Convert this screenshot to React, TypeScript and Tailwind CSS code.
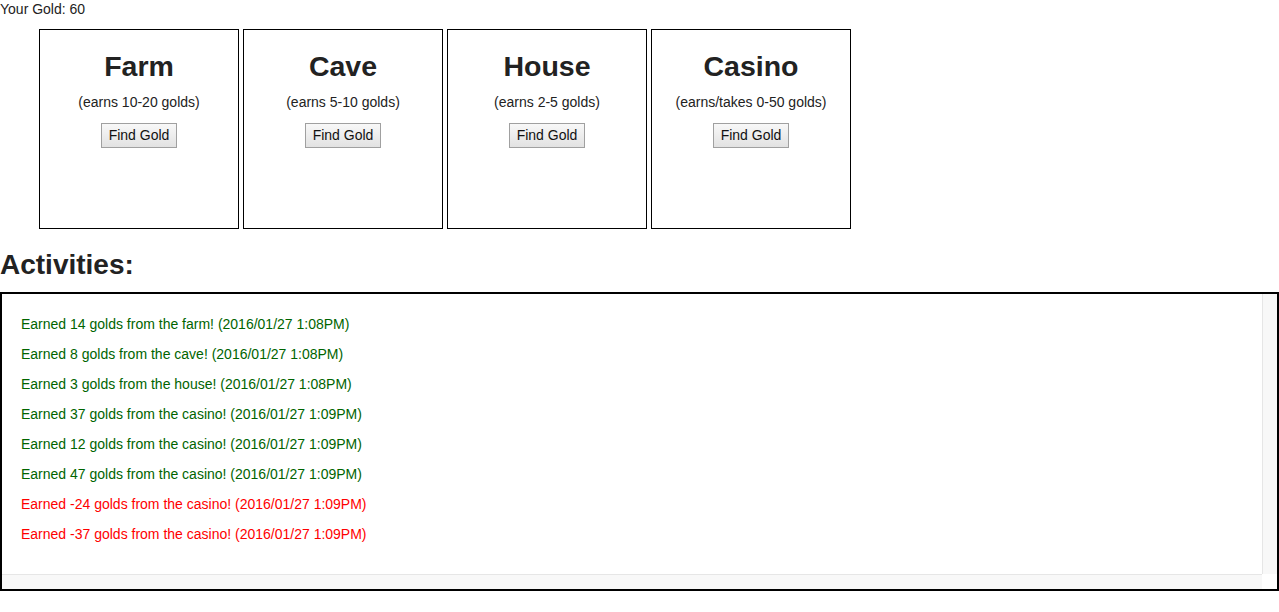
import React from "react";

const places = [
  { name: "Farm", desc: "(earns 10-20 golds)" },
  { name: "Cave", desc: "(earns 5-10 golds)" },
  { name: "House", desc: "(earns 2-5 golds)" },
  { name: "Casino", desc: "(earns/takes 0-50 golds)" },
];

const acts: { text: string; neg: boolean }[] = [
  { text: "Earned 14 golds from the farm! (2016/01/27 1:08PM)", neg: false },
  { text: "Earned 8 golds from the cave! (2016/01/27 1:08PM)", neg: false },
  { text: "Earned 3 golds from the house! (2016/01/27 1:08PM)", neg: false },
  { text: "Earned 37 golds from the casino! (2016/01/27 1:09PM)", neg: false },
  { text: "Earned 12 golds from the casino! (2016/01/27 1:09PM)", neg: false },
  { text: "Earned 47 golds from the casino! (2016/01/27 1:09PM)", neg: false },
  { text: "Earned -24 golds from the casino! (2016/01/27 1:09PM)", neg: true },
  { text: "Earned -37 golds from the casino! (2016/01/27 1:09PM)", neg: true },
];

export default function App() {
  return (
    <div
      className="w-[1279px] h-[612px] bg-white text-[#222] text-[14px] overflow-hidden"
      style={{ fontFamily: '"Liberation Sans", Arial, sans-serif' }}
    >
      <div className="h-[19px] leading-[18px]">Your Gold: 60</div>
      <div className="flex gap-[4px] ml-[39px] mt-[10px]">
        {places.map((p) => (
          <div
            key={p.name}
            className="w-[200px] h-[200px] border border-black flex flex-col items-center"
          >
            <div className="mt-[18px] text-[28.5px] leading-[36px] font-bold text-[#222]">
              {p.name}
            </div>
            <div className="mt-[10px] leading-[16px]">{p.desc}</div>
            <button className="mt-[13px] h-[25px] px-[7px] border border-[#a0a0a0] bg-gradient-to-b from-[#f8f8f8] to-[#e2e2e2] text-[14px] leading-[18px] pb-[2px] text-[#111]">
              Find Gold
            </button>
          </div>
        ))}
      </div>
      <div className="mt-[20px] text-[28px] leading-[32px] font-bold text-[#222]">
        Activities:
      </div>
      <div className="mt-[11px] w-[1279px] h-[299px] border-2 border-black flex flex-col">
        <div className="flex flex-1 min-h-0">
          <div className="flex-1 pt-[15px] pl-[19px]">
            {acts.map((a, i) => (
              <div
                key={i}
                className={`h-[30px] leading-[30px] ${a.neg ? "text-[#ff0000]" : "text-[#006400]"}`}
              >
                {a.text}
              </div>
            ))}
          </div>
          <div className="w-[15px] bg-[#f8f8f8] border-l border-[#e6e6e6]" />
        </div>
        <div className="flex h-[15px]">
          <div className="flex-1 bg-[#f8f8f8] border-t border-[#e6e6e6]" />
          <div className="w-[15px] bg-white" />
        </div>
      </div>
    </div>
  );
}
